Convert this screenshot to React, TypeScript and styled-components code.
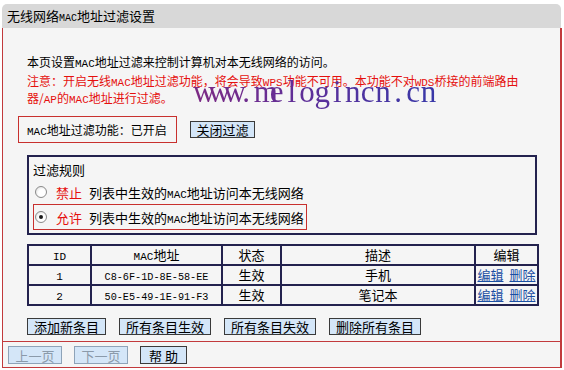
import React from 'react';
import styled, { createGlobalStyle } from 'styled-components';

const GlobalStyle = createGlobalStyle`
  html, body {
    margin: 0;
    padding: 0;
    background: #ffffff;
  }
  body {
    font-family: "Noto Sans CJK SC", "Liberation Sans", sans-serif;
    font-size: 12px;
    color: #000000;
  }
`;

const Page = styled.div`
  width: 564px;
  height: 370px;
  padding: 4px 2px 0 2px;
  box-sizing: border-box;
`;

const TitleBar = styled.div`
  height: 24px;
  background: #d8d8d8;
  border-radius: 5px 5px 0 0;
  padding-left: 5px;
  font-size: 13px;
  line-height: 24px;
  margin-right: 1px;
`;

const Body = styled.div`
  position: relative;
  background: #f5f5f5;
  border-left: 1px solid #c23a3c;
  border-right: 2px solid #c23a3c;
  padding: 25px 0 6px 24px;
`;

const Latin = styled.span<{ $size?: number }>`
  font-family: "Liberation Mono", "DejaVu Sans Mono", monospace;
  font-size: ${(p) => p.$size ?? 11}px;
  line-height: 1;
`;

const Para = styled.p<{ $warn?: boolean }>`
  margin: 0;
  line-height: 17px;
  color: ${(p) => (p.$warn ? '#e5100e' : '#000000')};
  & + & {
    margin-top: 2px;
  }
`;

const Watermark = styled.div`
  position: absolute;
  left: 190px;
  top: 47px;
  display: flex;
  font-family: "Liberation Serif", "DejaVu Serif", serif;
  font-size: 31px;
  line-height: 34px;
  background: linear-gradient(90deg, #7d2a84, #5b2f9a 50%, #3838a8);
  -webkit-background-clip: text;
  background-clip: text;
  color: transparent;
  pointer-events: none;
`;

const WaterChar = styled.span`
  display: inline-block;
  width: 15.2px;
  text-align: center;
`;

const StatusRow = styled.div`
  display: flex;
  align-items: center;
  margin-top: 10px;
  margin-left: -9px;
`;

const StatusBox = styled.div`
  box-sizing: border-box;
  width: 159px;
  height: 27px;
  border: 1px solid #c8302e;
  padding-left: 8px;
  display: flex;
  align-items: center;
`;

const Button = styled.button<{ $disabled?: boolean }>`
  box-sizing: border-box;
  height: ${(p) => (p.$disabled !== undefined ? 18 : 17)}px;
  padding: 0 6px;
  font-family: "Noto Sans CJK SC", sans-serif;
  font-size: 13px;
  line-height: 15px;
  white-space: nowrap;
  background: #d4e6f8;
  color: ${(p) => (p.$disabled ? '#8b9aaa' : '#000000')};
  border: 1px solid ${(p) => (p.$disabled ? '#8ea3b8' : '#3a3a3a')};
  border-radius: 0;
  cursor: pointer;
`;

const CloseButton = styled(Button)`
  margin-left: 13px;
  width: 65px;
  padding: 0;
`;

const RuleBox = styled.div`
  box-sizing: border-box;
  width: 510px;
  height: 80px;
  margin-top: 12px;
  border: 2px solid #23224e;
  padding: 4px 0 0 4px;
  font-size: 13px;
`;

const RuleTitle = styled.div`
  line-height: 17px;
`;

const Option = styled.div<{ $highlight?: boolean }>`
  display: flex;
  align-items: center;
  width: fit-content;
  box-sizing: border-box;
  height: ${(p) => (p.$highlight ? 26 : 24)}px;
  margin-top: ${(p) => (p.$highlight ? 0 : 2)}px;
  padding: 0 2px 0 1px;
  border: 1px solid ${(p) => (p.$highlight ? '#c8302e' : 'transparent')};
`;

const OptionText = styled.span`
  line-height: 17px;
`;

const Radio = styled.span<{ $checked?: boolean }>`
  position: relative;
  flex: none;
  width: 12px;
  height: 12px;
  border-radius: 50%;
  border: 1px solid #8a8a8a;
  background: radial-gradient(circle at 60% 60%, #ffffff 40%, #d6d6d6 100%);
  box-sizing: border-box;
  margin-right: 9px;
  &::after {
    content: '';
    display: ${(p) => (p.$checked ? 'block' : 'none')};
    position: absolute;
    left: 3px;
    top: 3px;
    width: 4px;
    height: 4px;
    border-radius: 50%;
    background: #1a1a1a;
  }
`;

const Verb = styled.span`
  color: #e5100e;
  margin-right: 7px;
`;

const Table = styled.table`
  width: 510px;
  margin-top: 9px;
  border-collapse: collapse;
  table-layout: fixed;
  font-size: 13px;
  border: 2px solid #23224e;
`;

const Cell = styled.td`
  border: 2px solid #23224e;
  height: 18px;
  padding: 0;
  line-height: 18px;
  text-align: center;
  white-space: nowrap;
`;

const HeadCell = styled(Cell).attrs({ as: 'th' })`
  font-weight: normal;
`;

const EditLink = styled.a`
  color: #1b4fa3;
  text-decoration: underline;
  cursor: pointer;
  & + & {
    margin-left: 6px;
  }
`;

const ButtonRow = styled.div<{ $gap: number }>`
  display: flex;
  gap: ${(p) => p.$gap}px;
  margin-top: 12px;
`;

const Footer = styled.div`
  box-sizing: border-box;
  height: 27px;
  border: 1px solid #c23a3c;
  border-right-width: 2px;
  background: #f5f5f5;
  padding: 4px 0 0 5px;
  display: flex;
  gap: 12px;
`;

const PageButton = styled(Button)<{ $w: number }>`
  width: ${(p) => p.$w}px;
  padding: 0;
`;

const rows = [
  { id: '1', mac: 'C8-6F-1D-8E-58-EE', state: '生效', desc: '手机' },
  { id: '2', mac: '50-E5-49-1E-91-F3', state: '生效', desc: '笔记本' },
];

const watermark = 'www.melogincn.cn';

const Mac = () => <Latin>MAC</Latin>;

export default function App() {
  return (
    <>
      <GlobalStyle />
      <Page>
        <TitleBar>
          无线网络<Latin $size={10}>MAC</Latin>地址过滤设置
        </TitleBar>
        <Body>
          <Para>
            本页设置<Mac />地址过滤来控制计算机对本无线网络的访问。
          </Para>
          <Para $warn>
            注意：开启无线<Mac />地址过滤功能，将会导致<Latin>WPS</Latin>功能不可用。本功能不对<Latin>WDS</Latin>桥接的前端路由
            <br />
            器/<Latin>AP</Latin>的<Mac />地址进行过滤。
          </Para>
          <Watermark>
            {watermark.split('').map((ch, i) => (
              <WaterChar key={i}>{ch}</WaterChar>
            ))}
          </Watermark>

          <StatusRow>
            <StatusBox>
              <OptionText>
                <Mac />地址过滤功能：已开启
              </OptionText>
            </StatusBox>
            <CloseButton>关闭过滤</CloseButton>
          </StatusRow>

          <RuleBox>
            <RuleTitle>过滤规则</RuleTitle>
            <Option>
              <Radio />
              <OptionText>
                <Verb>禁止</Verb>
                列表中生效的<Mac />地址访问本无线网络
              </OptionText>
            </Option>
            <Option $highlight>
              <Radio $checked />
              <OptionText>
                <Verb>允许</Verb>
                列表中生效的<Mac />地址访问本无线网络
              </OptionText>
            </Option>
          </RuleBox>

          <Table>
            <colgroup>
              <col style={{ width: 63 }} />
              <col style={{ width: 131 }} />
              <col style={{ width: 59 }} />
              <col style={{ width: 194 }} />
              <col style={{ width: 63 }} />
            </colgroup>
            <thead>
              <tr>
                <HeadCell><Latin>ID</Latin></HeadCell>
                <HeadCell><Mac />地址</HeadCell>
                <HeadCell>状态</HeadCell>
                <HeadCell>描述</HeadCell>
                <HeadCell>编辑</HeadCell>
              </tr>
            </thead>
            <tbody>
              {rows.map((r) => (
                <tr key={r.id}>
                  <Cell><Latin>{r.id}</Latin></Cell>
                  <Cell><Latin $size={10.2}>{r.mac}</Latin></Cell>
                  <Cell>{r.state}</Cell>
                  <Cell>{r.desc}</Cell>
                  <Cell>
                    <EditLink>编辑</EditLink>
                    <EditLink>删除</EditLink>
                  </Cell>
                </tr>
              ))}
            </tbody>
          </Table>

          <ButtonRow $gap={13}>
            <Button>添加新条目</Button>
            <Button>所有条目生效</Button>
            <Button>所有条目失效</Button>
            <Button>删除所有条目</Button>
          </ButtonRow>
        </Body>
        <Footer>
          <PageButton $w={54} $disabled>上一页</PageButton>
          <PageButton $w={54} $disabled>下一页</PageButton>
          <PageButton $w={47} $disabled={false}>帮 助</PageButton>
        </Footer>
      </Page>
    </>
  );
}
